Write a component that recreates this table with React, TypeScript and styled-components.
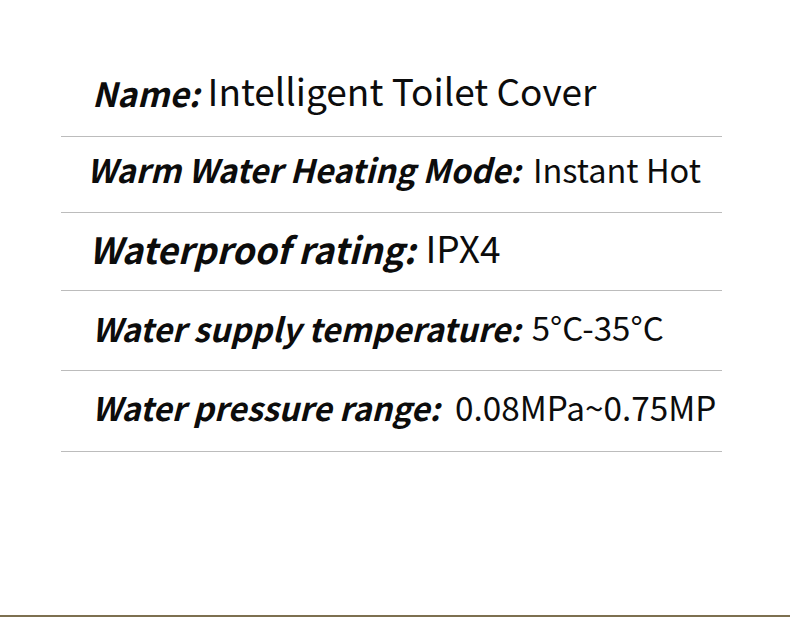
import React from 'react'
import styled, { createGlobalStyle } from 'styled-components'

const GlobalStyle = createGlobalStyle`
  html, body {
    margin: 0;
    padding: 0;
    background: #ffffff;
  }
`

const Page = styled.div`
  width: 790px;
  height: 617px;
  position: relative;
  box-sizing: border-box;
  border-bottom: 2px solid #7d7050;
  font-family: 'Noto Sans CJK SC', 'Noto Sans', sans-serif;
  color: #0c0c0c;
`

const SpecList = styled.div`
  width: 661px;
  margin-left: 61px;
  display: flex;
  flex-direction: column;
`

const SpecRow = styled.div<{ $h: number; $indent: number; $pb: number }>`
  height: ${({ $h }) => $h}px;
  box-sizing: border-box;
  border-bottom: 1px solid #bcbcbc;
  display: flex;
  align-items: flex-end;
  padding-left: ${({ $indent }) => $indent}px;
  padding-bottom: ${({ $pb }) => $pb}px;
  line-height: 1;
  white-space: nowrap;
`

const Label = styled.span<{ $size: number }>`
  font-size: ${({ $size }) => $size}px;
  font-weight: 700;
  font-style: italic;
`

const Value = styled.span<{ $size: number; $gap: number }>`
  font-size: ${({ $size }) => $size}px;
  font-weight: 400;
  margin-left: ${({ $gap }) => $gap}px;
`

// sizes differ a little per row, as in the source image
const specs = [
  { label: 'Name:', value: 'Intelligent Toilet Cover', h: 137, indent: 31, pb: 27, ls: 33.5, vs: 37, gap: 8 },
  { label: 'Warm Water Heating Mode:', value: 'Instant Hot', h: 76, indent: 26, pb: 27, ls: 32.5, vs: 32.5, gap: 12 },
  { label: 'Waterproof rating:', value: 'IPX4', h: 78, indent: 28, pb: 24, ls: 36, vs: 37, gap: 10 },
  { label: 'Water supply temperature:', value: '5°C-35°C', h: 80, indent: 31, pb: 26, ls: 32.5, vs: 33, gap: 11 },
  { label: 'Water pressure range:', value: '0.08MPa~0.75MP', h: 81, indent: 31, pb: 28, ls: 32.4, vs: 33.3, gap: 15 },
]

const App: React.FC = () => {
  return (
    <Page>
      <GlobalStyle />
      <SpecList>
        {specs.map((s) => (
          <SpecRow key={s.label} $h={s.h} $indent={s.indent} $pb={s.pb}>
            <Label $size={s.ls}>{s.label}</Label>
            <Value $size={s.vs} $gap={s.gap}>{s.value}</Value>
          </SpecRow>
        ))}
      </SpecList>
    </Page>
  )
}

export default App
